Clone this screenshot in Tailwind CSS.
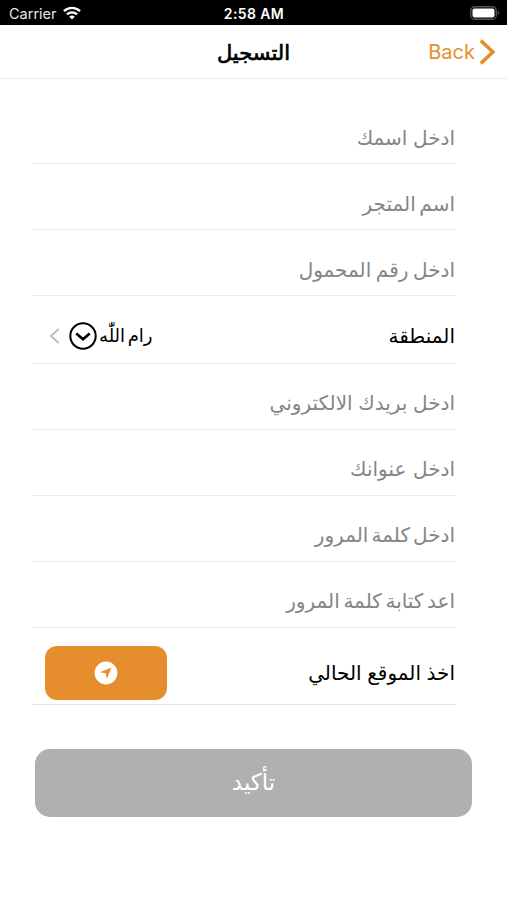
<!DOCTYPE html>
<html lang="ar">
<head>
  <meta charset="UTF-8" />
  <meta name="viewport" content="width=device-width, initial-scale=1.0" />
  <title>التسجيل</title>
  <script src="https://cdn.jsdelivr.net/npm/@tailwindcss/browser@4"></script>
</head>
<body class="bg-white text-black min-h-screen overflow-hidden font-['Inter','DejaVu_Sans',sans-serif]">
  <!-- Status bar -->
  <div class="h-[25px] bg-black text-white grid grid-cols-3 items-center pt-[2px] pl-[9px] pr-[7px]">
    <div class="flex items-center gap-[6px]">
      <span class="text-[14.5px] leading-none text-gray-200 pt-px">Carrier</span>
      <svg class="w-[18px] h-[14px] -mt-[2px]" viewBox="0 0 18 14" fill="none" stroke="white" stroke-width="2.4">
        <path d="M1 5.2a11.4 11.4 0 0 1 16 0" />
        <path d="M4 8.4a7.2 7.2 0 0 1 10 0" />
        <path d="M9 13.6 6.2 10.8a4 4 0 0 1 5.6 0z" fill="white" stroke="none" />
      </svg>
    </div>
    <span class="text-center text-[14px] tracking-[0.4px] leading-none font-semibold pr-px">2:58 AM</span>
    <div class="flex justify-end -mt-[2px]">
      <svg class="w-[30px] h-[14px]" viewBox="0 0 30 14">
        <rect x="0.75" y="0.75" width="25.5" height="12.5" rx="4" fill="none" stroke="#555" stroke-width="1.3" />
        <rect x="2.5" y="2.5" width="22" height="9" rx="2" fill="white" />
        <path d="M27.7 4.8c1.5.6 1.5 3.8 0 4.4z" fill="#666" />
      </svg>
    </div>
  </div>

  <!-- Navigation bar -->
  <div class="h-[54px] border-b border-[#ececec] grid grid-cols-3 items-center pr-[11px]">
    <span></span>
    <h1 dir="rtl" class="text-center text-[21px] leading-none [-webkit-text-stroke:0.7px_black] pl-[11px] pt-[2px]">التسجيل</h1>
    <button class="flex items-center justify-end gap-[4px] text-[#e68e2e]">
      <span class="text-[20px] leading-none pt-px">Back</span>
      <svg class="w-[17px] h-[26px]" viewBox="0 0 17 26" fill="none" stroke="currentColor" stroke-width="3.6">
        <path d="M1.8 1.5 13.8 13 1.8 24.5" />
      </svg>
    </button>
  </div>

  <form dir="rtl" class="pt-[19px] pl-[32px] pr-[51px] text-[20px] leading-none">
    <div class="h-[66px] border-b border-[#ececec] flex items-center pt-[14px] pr-px text-[#858585]">ادخل اسمك</div>
    <div class="h-[66px] border-b border-[#ececec] flex items-center pt-[14px] pr-px text-[#858585] [word-spacing:-2px]">اسم المتجر</div>
    <div class="h-[66px] border-b border-[#ececec] flex items-center pt-[14px] pr-px text-[#858585] [word-spacing:-1px]">ادخل رقم المحمول</div>

    <div class="h-[68px] border-b border-[#ececec] flex items-center justify-between pt-[13px] pl-[17px] pr-px">
      <span>المنطقة</span>
      <div class="flex items-center">
        <span class="text-[18px] [word-spacing:-2.5px]">رام اللّٰه</span>
        <svg class="w-[28px] h-[28px] ml-[9px] mr-[2px]" viewBox="0 0 28 28" fill="none" stroke="black">
          <circle cx="14" cy="14" r="12.7" stroke-width="2" />
          <path d="M7.3 11.5 14 17.2 20.7 11.5" stroke-width="2.7" />
        </svg>
        <svg class="w-[11px] h-[16px]" viewBox="0 0 11 16" fill="none" stroke="#bdbdbd" stroke-width="2">
          <path d="M9.6 1 2 8l7.6 7" />
        </svg>
      </div>
    </div>

    <div class="h-[66px] border-b border-[#ececec] flex items-center pt-[13px] pr-px text-[#858585]">ادخل بريدك الالكتروني</div>
    <div class="h-[66px] border-b border-[#ececec] flex items-center pt-[13px] pr-px text-[#858585] [word-spacing:1px]">ادخل عنوانك</div>
    <div class="h-[66px] border-b border-[#ececec] flex items-center pt-[13px] pr-px text-[#858585] [word-spacing:-2.5px]">ادخل كلمة المرور</div>
    <div class="h-[66px] border-b border-[#ececec] flex items-center pt-[13px] pr-px text-[#858585] [word-spacing:-2px]">اعد كتابة كلمة المرور</div>

    <div class="h-[77px] border-b border-[#e4e4e4] flex items-center justify-between pt-[13px] pl-[13px] pr-px">
      <span>اخذ الموقع الحالي</span>
      <button type="button" class="w-[122px] h-[54px] rounded-[12px] bg-[#e68e2e] flex items-center justify-center">
        <svg class="w-[24px] h-[24px]" viewBox="0 0 24 24">
          <circle cx="12" cy="12" r="11.4" fill="white" />
          <path d="M17.5 6.5 12.8 18 11.8 12.2 6 11.3z" fill="#e68e2e" />
        </svg>
      </button>
    </div>
  </form>

  <!-- Submit -->
  <div class="pl-[35px] pr-[35px] pt-[44px]">
    <button dir="rtl" class="w-full h-[68px] rounded-[15px] bg-[#b0b0b0] text-white text-[23px] leading-none pb-[2px]">تأكيد</button>
  </div>
</body>
</html>
